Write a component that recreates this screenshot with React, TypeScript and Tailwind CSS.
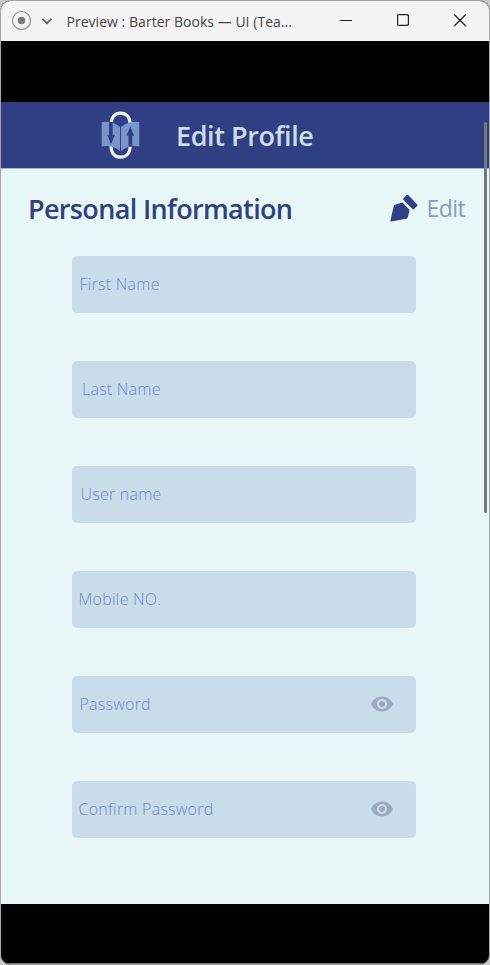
import { MdVisibility } from "react-icons/md";

const fields = [
  { label: "First Name", pad: "pl-[7.5px]", secret: false },
  { label: "Last Name", pad: "pl-[10px]", secret: false },
  { label: "User name", pad: "pl-[8.5px]", secret: false },
  { label: "Mobile NO.", pad: "pl-[6.5px]", secret: false },
  { label: "Password", pad: "pl-[7.5px]", secret: true },
  { label: "Confirm Password", pad: "pl-[6.5px]", secret: true },
];

function TitleBar() {
  return (
    <div className="flex h-10 shrink-0 items-center bg-[#f4f4f4] text-[#454545]">
      <svg className="ml-[10px] mb-[2px] h-5 w-5 shrink-0" viewBox="0 0 20 20">
        <circle cx="10.5" cy="10.5" r="9" fill="none" stroke="#8b8b8b" strokeWidth="1.1" />
        <circle cx="10.5" cy="10.5" r="3.7" fill="#7a7a7a" />
      </svg>
      <svg className="ml-[10px] h-3 w-3 shrink-0" viewBox="0 0 12 12">
        <path d="M1.5 3.8 6 8.2 10.5 3.8" fill="none" stroke="#606060" strokeWidth="1.7" />
      </svg>
      <span className="ml-[13.5px] w-[228px] whitespace-nowrap text-[14px] tracking-[0.03px]">
        Preview : Barter Books — UI (Tea...
      </span>
      <svg className="mb-[2px] ml-[44.5px] h-5 w-[132px] shrink-0" viewBox="0 0 132 20" fill="none" stroke="#222" strokeWidth="1.2">
        <path d="M1 10.5H13" />
        <rect x="58.6" y="4.6" width="10.8" height="10.8" rx="1.2" />
        <path d="M115.2 4.5 126.8 16M126.8 4.5 115.2 16" />
      </svg>
    </div>
  );
}

function Logo() {
  return (
    <svg className="mb-[2px] ml-[99px] h-12 w-10 shrink-0" viewBox="0 0 40 48">
      <path d="M11 14C11 6 15 2.2 20.6 2.2S30.3 6 30.3 14M11 34C11 42.5 15 46.2 20.6 46.2S30.3 42.5 30.3 34" fill="none" stroke="#e8f8f9" strokeWidth="3.2" />
      <path d="M1.7 11Q12 9.5 20 16V40Q12 33.5 1.7 35.5ZM21 16Q29 9.5 39.3 11V35.5Q29 33.5 21 40Z" fill="#7896cb" />
      <path d="M9 11H12.7V24.5L15 23.5 11 33.5 7.2 23.5 9 24.5ZM28.5 35.8V24.5L26.3 25 30.3 15.5 34.3 25 32.2 24.5V35.8Z" fill="#303f84" />
    </svg>
  );
}

function Pen() {
  return (
    <svg className="mb-[2px] h-7 w-7 shrink-0" viewBox="0 0 28 28" fill="#2f4087">
      <path d="M3.7 12.2Q3.8 11 5 10.7L12.5 8.4 19.6 16 17.8 23.3Q17.5 24.5 16.3 24.7L1.2 27.6.4 26.9Z" />
      <path d="M16.5 1.1Q17.3.2 18.2 1.1L27.2 10.4Q27.9 11.2 27.1 12L23.3 15.8 12.8 5.3Z" />
    </svg>
  );
}

export default function App() {
  return (
    <div className="h-[965px] w-[490px] bg-[#c9c9c9] font-['Open_Sans','Noto_Sans',sans-serif]">
      <div className="relative flex h-[965px] w-[490px] flex-col overflow-hidden rounded-[10px] border border-[#a5a5a5] bg-black">
        <TitleBar />
        <div className="mt-[61px] flex h-[67px] shrink-0 items-center border-b border-[#aab9d3] bg-[#303f84] pt-px">
          <Logo />
          <h1 className="ml-[36px] whitespace-nowrap text-[27px] font-semibold leading-none tracking-[-0.4px] text-[#cbdee9]">Edit Profile</h1>
        </div>
        <main className="h-[735px] shrink-0 bg-[#e8f8f9]">
          <div className="flex h-[86.5px] items-center justify-between pl-[27px] pr-6 pb-[7px]">
            <h2 className="whitespace-nowrap text-[27px] font-semibold leading-none tracking-[-0.65px] text-[#2f4087]">Personal Information</h2>
            <button className="flex items-center gap-[9px]">
              <Pen />
              <span className="text-[23px] leading-none tracking-[-0.6px] text-[#7f9bcd]">Edit</span>
            </button>
          </div>
          <div className="ml-[71px] flex w-[344px] flex-col gap-12">
            {fields.map((f) => (
              <div key={f.label} className={`flex h-[57px] items-center justify-between rounded-[5px] bg-[#c9dce9] pr-[22px] ${f.pad}`}>
                <span className="whitespace-nowrap text-[16px] font-light tracking-[0.24px] text-[#6c89c5]">{f.label}</span>
                {f.secret && <MdVisibility className="mb-px h-6 w-6 text-[#9baabf]" />}
              </div>
            ))}
          </div>
        </main>
        <div className="absolute left-[483px] top-[121px] h-[391px] w-[3px] rounded-full bg-[#747879]" />
        <div className="absolute bottom-0 left-0 h-px w-full bg-[#777]" />
      </div>
    </div>
  );
}
